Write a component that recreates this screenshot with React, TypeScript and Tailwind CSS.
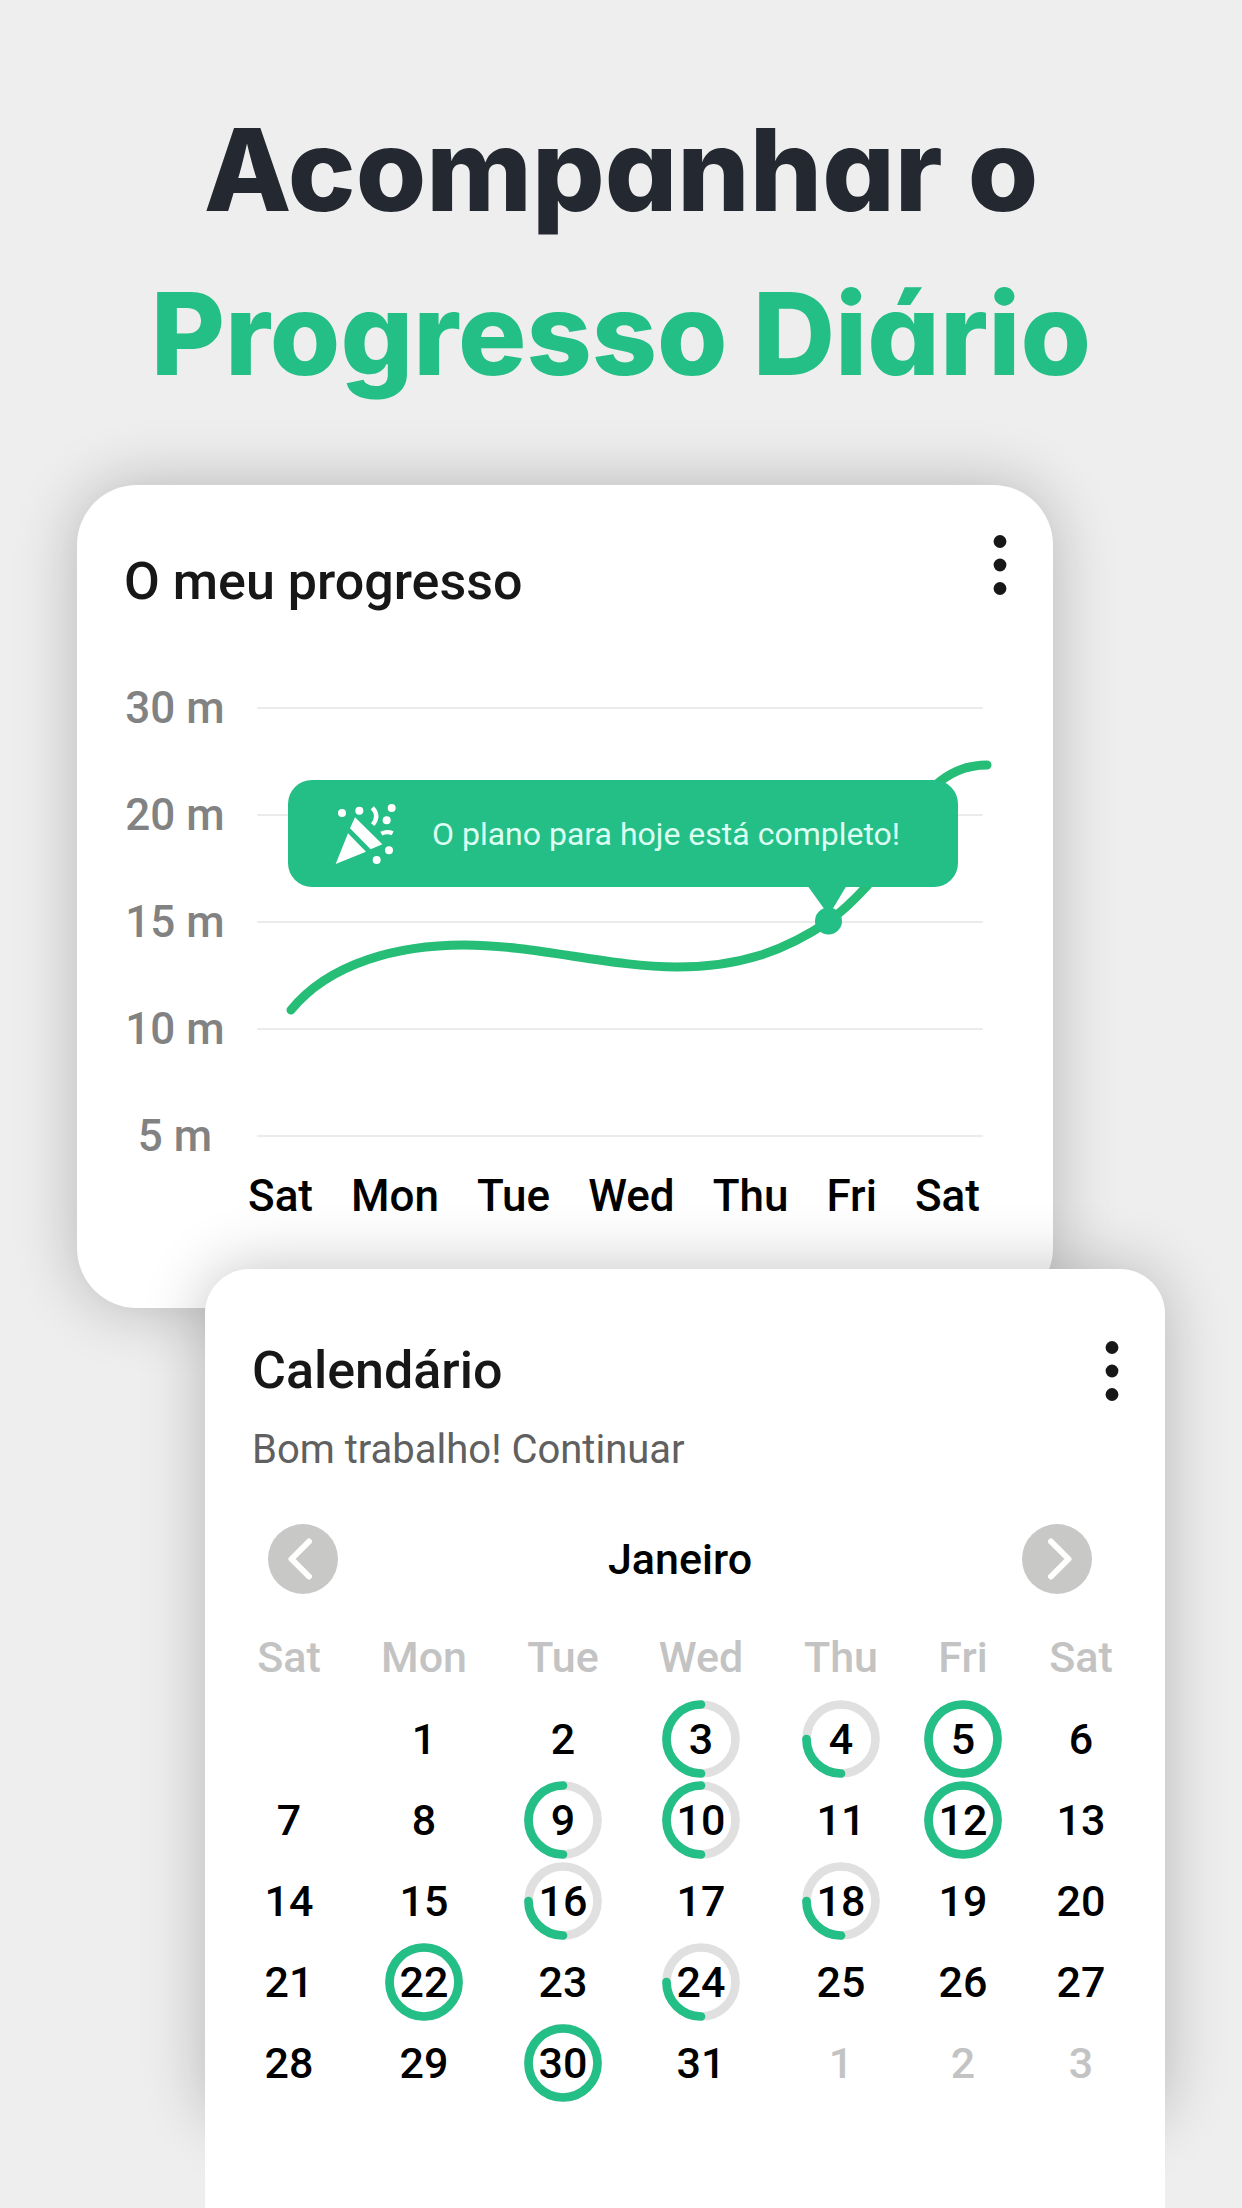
const axisLabels = ['30 m', '20 m', '15 m', '10 m', '5 m'];
const weekdays = ['Sat', 'Mon', 'Tue', 'Wed', 'Thu', 'Fri', 'Sat'];

type Progress = 'full' | 'half' | 'quarter';

const progressByDay: Record<number, Progress> = {
  3: 'half',
  4: 'quarter',
  5: 'full',
  9: 'half',
  10: 'half',
  12: 'full',
  16: 'quarter',
  18: 'quarter',
  22: 'full',
  24: 'quarter',
  30: 'full',
};

const weeks: (number | null)[][] = [
  [null, 1, 2, 3, 4, 5, 6],
  [7, 8, 9, 10, 11, 12, 13],
  [14, 15, 16, 17, 18, 19, 20],
  [21, 22, 23, 24, 25, 26, 27],
  [28, 29, 30, 31, 1, 2, 3],
];

const ringArcs: Record<Progress, string> = {
  full: 'M39 4.5 A34.5 34.5 0 1 1 39 73.5 A34.5 34.5 0 1 1 39 4.5 Z',
  half: 'M39 73.5 A34.5 34.5 0 0 1 39 4.5',
  quarter: 'M39 73.5 A34.5 34.5 0 0 1 4.5 39',
};

function MoreButton({ label }: { label: string }) {
  return (
    <button type="button" aria-label={label} className="flex h-[66px] w-10 items-center justify-center">
      <svg width="14" height="60" viewBox="0 0 14 60" fill="#171717" aria-hidden="true">
        <circle cx="7" cy="6.5" r="6.4" />
        <circle cx="7" cy="30" r="6.4" />
        <circle cx="7" cy="53.5" r="6.4" />
      </svg>
    </button>
  );
}

function PartyIcon() {
  return (
    <svg width="63" height="62" viewBox="72 66 189 186" fill="#fff" className="shrink-0" aria-hidden="true">
      <path d="M77 249 L114 157 L168 212 Z" />
      <path d="M135 109 L217 190 L182 205 L120 142 Z" />
      <circle cx="96" cy="96" r="12" />
      <circle cx="148" cy="89" r="12" />
      <circle cx="245" cy="81" r="12" />
      <circle cx="230" cy="118" r="12" />
      <circle cx="237" cy="208" r="12" />
      <circle cx="200" cy="237" r="12" />
      <path
        d="M187 80 Q210 104 188 131 M214 158 Q231 149 248 157"
        fill="none"
        stroke="#fff"
        strokeWidth="13"
        strokeLinecap="butt"
      />
    </svg>
  );
}

function ArrowButton({ direction }: { direction: 'previous' | 'next' }) {
  return (
    <button
      type="button"
      aria-label={direction === 'previous' ? 'Mês anterior' : 'Próximo mês'}
      className="size-[70px] rounded-full bg-[#c8c8c7]"
    >
      <svg viewBox="0 0 70 70" fill="none" stroke="#fff" strokeWidth="6" strokeLinecap="round" strokeLinejoin="round" aria-hidden="true">
        <path d={direction === 'previous' ? 'M41 17.500 L23.500 35 L41 52.500' : 'M29 17.500 L46.500 35 L29 52.500'} />
      </svg>
    </button>
  );
}

function DayRing({ progress }: { progress: Progress }) {
  return (
    <svg
      viewBox="0 0 78 78"
      fill="none"
      strokeWidth="8.7"
      strokeLinecap="round"
      className="absolute top-1/2 left-1/2 size-[78px] -translate-1/2"
      aria-hidden="true"
    >
      <circle cx="39" cy="39" r="34.5" stroke="#e0e0e0" />
      <path d={ringArcs[progress]} stroke="#24be87" />
    </svg>
  );
}

function ProgressCard() {
  return (
    <section className="mr-[189px] ml-[77px] rounded-[60px] bg-white pb-[86px] shadow-[0_0_64px_rgba(0,0,0,0.24)]">
      <header className="flex items-start justify-between pt-[47px] pr-[33px] pl-[47px]">
        <h2 className="pt-5 text-[52px] leading-[60px] font-medium text-[#171717]">O meu progresso</h2>
        <MoreButton label="Opções do progresso" />
      </header>

      <div className="relative mt-[70px] mr-[70px] ml-[47px] flex flex-col gap-[55px]">
        {axisLabels.map((label) => (
          <div key={label} className="flex items-center gap-[31px]">
            <span className="w-[102px] text-center text-[44px] leading-[52px] font-medium whitespace-nowrap text-[#828282]">
              {label}
            </span>
            <span className="h-0.5 flex-1 rounded-full bg-[#ebebeb]" />
          </div>
        ))}

        <svg
          viewBox="124 682 859 480"
          preserveAspectRatio="none"
          className="absolute inset-0 h-full w-full overflow-visible"
          aria-hidden="true"
        >
          <path
            d="M291 1010 C330 962 400 945 464 945 C535 945 610 967 677 967 C740 967 785 951 829 921 C843 911 855 899 867 886 C905 840 920 765 987 765"
            fill="none"
            stroke="#26bd76"
            strokeWidth="9"
            strokeLinecap="round"
          />
          <path d="M807 885 L847 885 L832 910 L825 910 Z" fill="#24be87" />
          <circle cx="828.500" cy="921" r="13.500" fill="#24be87" />
        </svg>

        <div className="absolute top-[98px] right-[25px] left-[164px] flex h-[107px] items-center gap-[35px] rounded-3xl bg-[#24be87] pl-[46px] text-[32px] leading-10 whitespace-nowrap text-[#dcfff1]">
          <PartyIcon />
          O plano para hoje está completo!
        </div>
      </div>

      <div className="mt-2 mr-[73px] ml-[171px] flex justify-between text-[44px] leading-[52px] font-medium text-black">
        {weekdays.map((day, index) => (
          <span key={index}>{day}</span>
        ))}
      </div>
    </section>
  );
}

function CalendarCard() {
  return (
    <section className="relative -mt-[39px] mr-[77px] ml-[205px] flex flex-1 flex-col">
      <div className="absolute inset-x-0 top-0 bottom-[82px] rounded-[45px] shadow-[0_0_64px_rgba(0,0,0,0.24)]" />
      <div className="relative flex-1 rounded-t-[45px] bg-white pt-[69px] pb-[98px]">
        <header className="flex items-center justify-between pr-[33px] pl-[47px]">
          <h2 className="text-[52px] leading-[60px] font-medium text-[#171717]">Calendário</h2>
          <MoreButton label="Opções do calendário" />
        </header>
        <p className="mt-[22px] pl-[47px] text-[40px] leading-[48px] text-[#606060]">Bom trabalho! Continuar</p>

        <div className="mt-[50px] mr-[73px] ml-[63px] flex items-center justify-between">
          <ArrowButton direction="previous" />
          <h3 className="text-[43px] leading-[52px] font-medium text-black">Janeiro</h3>
          <ArrowButton direction="next" />
        </div>

        <div className="mt-[37px] mr-[15px] ml-[17px]">
          <table className="w-full table-fixed border-collapse text-center text-[43px] leading-[52px] font-medium text-black">
            <colgroup>
              <col className="w-[134px]" />
              <col className="w-[136px]" />
              <col className="w-[142px]" />
              <col className="w-[134px]" />
              <col className="w-[146px]" />
              <col className="w-[98px]" />
              <col className="w-[138px]" />
            </colgroup>
            <thead>
              <tr className="h-[67px] align-top text-[#c3c3c3]">
                {weekdays.map((day, index) => (
                  <th key={index} scope="col" className="p-0 font-medium">
                    {day}
                  </th>
                ))}
              </tr>
            </thead>
            <tbody>
              {weeks.map((week, weekIndex) => (
                <tr key={weekIndex} className="h-[81px]">
                  {week.map((day, dayIndex) => {
                    const nextMonth = weekIndex === 4 && day !== null && day < 7;
                    const progress = day !== null && !nextMonth ? progressByDay[day] : undefined;
                    return (
                      <td key={dayIndex} className={nextMonth ? 'p-0 text-[#c3c3c3]' : 'relative p-0'}>
                        {progress && <DayRing progress={progress} />}
                        <span className="relative">{day}</span>
                      </td>
                    );
                  })}
                </tr>
              ))}
            </tbody>
          </table>
        </div>
      </div>
    </section>
  );
}

export default function App() {
  return (
    <main className="flex min-h-screen flex-col bg-[#eeeeee] font-[Roboto,sans-serif]">
      <h1 className="pt-[88px] pb-[69px] text-center font-[Inter,sans-serif] text-[114px] leading-[164px] font-extrabold text-[#242830] [font-feature-settings:'cv11']">
        Acompanhar o
        <span className="block text-[#24be87]">Progresso Diário</span>
      </h1>
      <ProgressCard />
      <CalendarCard />
    </main>
  );
}
